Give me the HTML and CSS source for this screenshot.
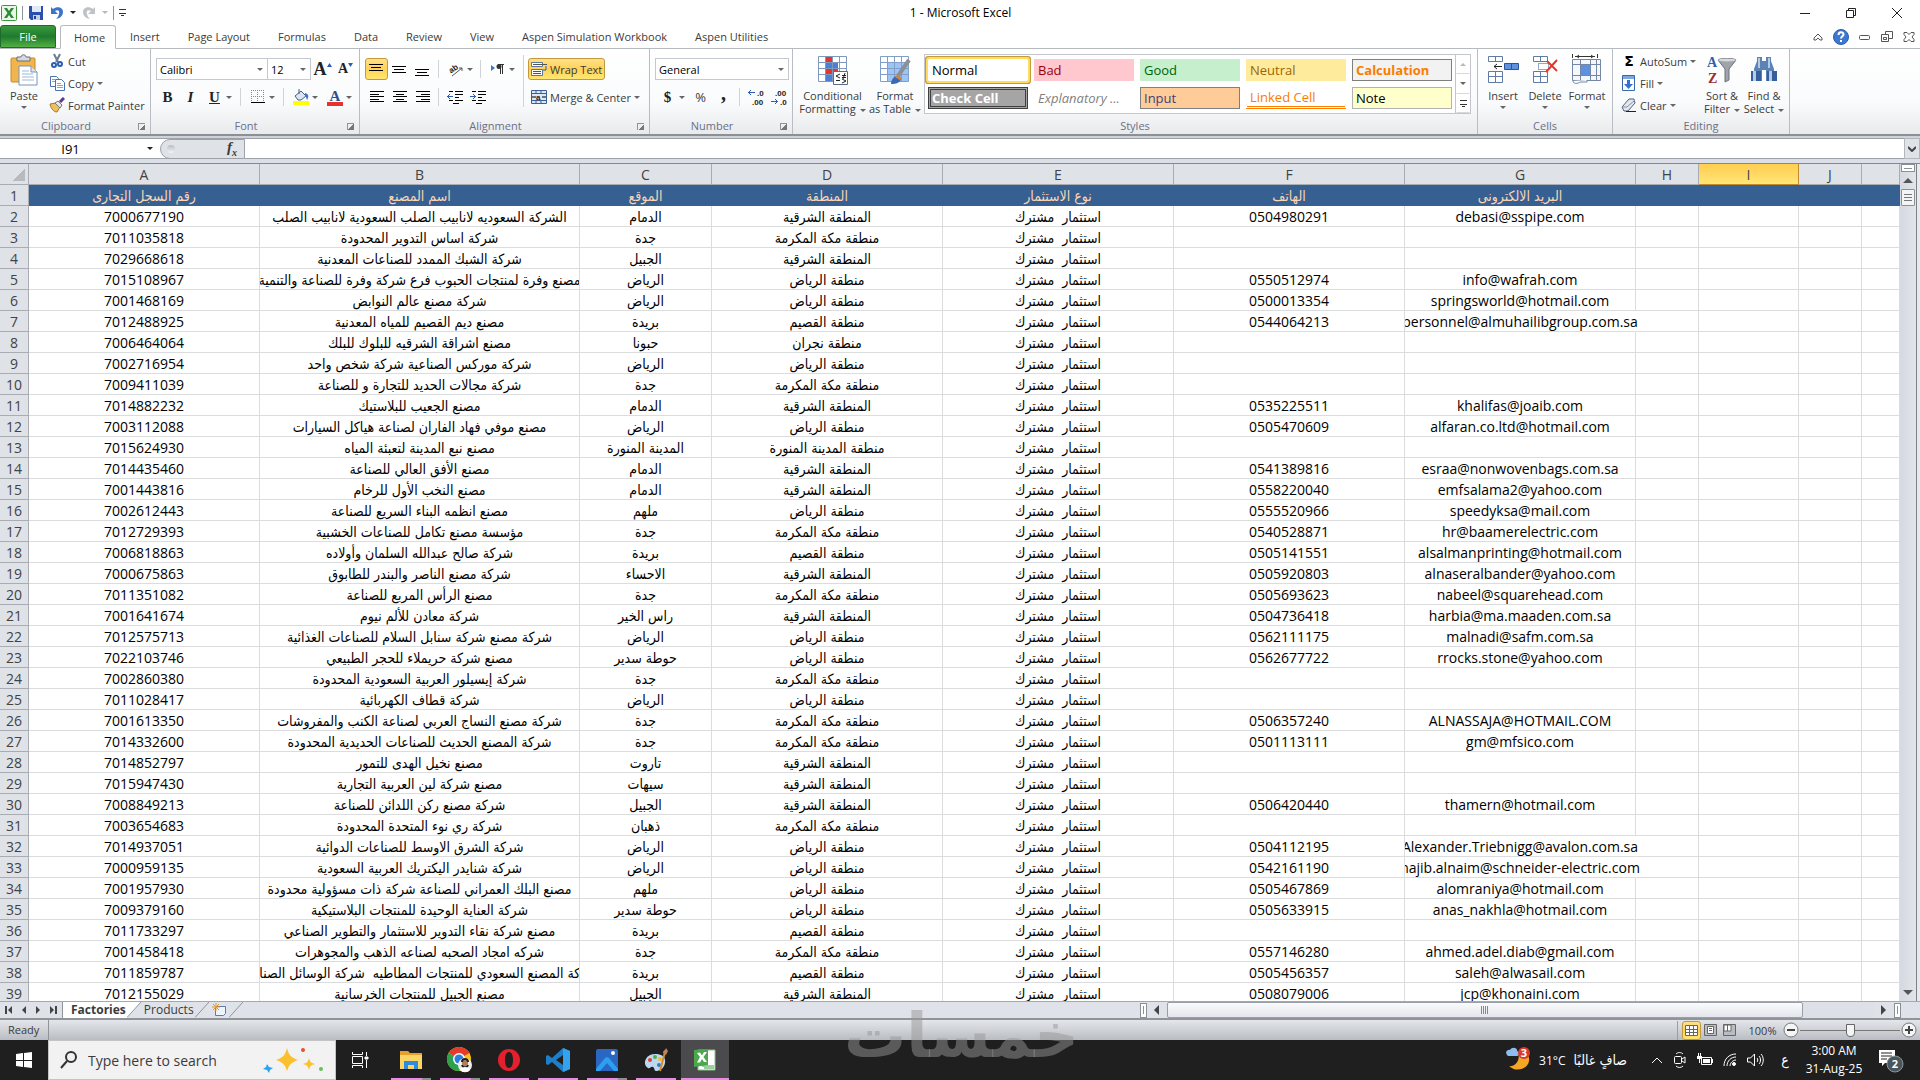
FILE: index.html
```html
<!DOCTYPE html>
<html lang="en">
<head>
  <meta charset="UTF-8">
  <meta name="viewport" content="width=device-width, initial-scale=1.0">
  <title>1 - Microsoft Excel</title>
  <link rel="stylesheet" href="styles.css">
</head>
<body>
  <header class="titlebar">
    <div class="quick">
      <svg width="16" height="16" viewBox="0 0 16 16"><rect x=".5" y=".5" width="15" height="15" rx="1" fill="#e9f5e6" stroke="#3c9a3c"/><path d="M3 3h3l2 3 2-3h3l-3.500 5 3.500 5h-3L8 10l-2 3H3l3.500-5z" fill="#2a8a35"/></svg>
      <span class="bar"></span>
      <button aria-label="Save"><svg width="14" height="14" viewBox="0 0 14 14"><path d="M0 0h14v14H2L0 12z" fill="#2b4fae"/><path d="M3 0h9v6H3z" fill="#dfe9f8"/><path d="M4 9h7v5H4z" fill="#c7d0de"/><path d="M5 10h2v3H5z" fill="#24418f"/></svg></button>
      <button aria-label="Undo"><svg width="14" height="14" viewBox="0 0 14 14"><path d="M1 1v7h7L5 5c3-2 5 0 4 3-.5 2-1 3-3 5 5-1 7-4 7-7 0-5-6-6-10-3z" fill="#3b74c9"/></svg></button>
      <i class="caret dark"></i>
      <button aria-label="Redo"><svg width="14" height="14" viewBox="0 0 14 14"><path d="M13 1v7H6l3-3C6 3 4 5 5 8c.5 2 1 3 3 5-5-1-7-4-7-7 0-5 6-6 10-3z" fill="#bfc3c8"/></svg></button>
      <i class="caret light"></i>
      <span class="bar"></span>
      <i class="more"></i>
    </div>
    <h1 class="title">1 - Microsoft Excel</h1>
    <div class="window-buttons">
      <button aria-label="Minimize"><svg width="12" height="12"><path d="M1 6.500h10" stroke="#222"/></svg></button>
      <button aria-label="Restore"><svg width="12" height="12" fill="none" stroke="#222"><path d="M1.500 3.500h7v7h-7zM3.500 3.500v-2h7v7h-2"/></svg></button>
      <button aria-label="Close"><svg width="12" height="12"><path d="M1 1l10 10M11 1L1 11" stroke="#222"/></svg></button>
    </div>
  </header>

  <nav class="tabs">
    <button class="tab file">File</button>
    <button class="tab active">Home</button>
    <button class="tab">Insert</button>
    <button class="tab">Page Layout</button>
    <button class="tab">Formulas</button>
    <button class="tab">Data</button>
    <button class="tab">Review</button>
    <button class="tab">View</button>
    <button class="tab">Aspen Simulation Workbook</button>
    <button class="tab">Aspen Utilities</button>
    <div class="tab-tools">
      <button aria-label="Collapse ribbon"><svg width="10" height="8" fill="none" stroke="#555"><path d="M1 5l4-4 4 4v2H7L5 5 3 7H1z"/></svg></button>
      <button aria-label="Help"><svg width="16" height="16"><circle cx="8" cy="8" r="7.500" fill="#3c78cf" stroke="#2a5cab"/><path d="M5.500 6c0-3.500 5-3.500 5-.5 0 1.500-2.500 2-2.500 4M8 11v2" fill="none" stroke="#fff" stroke-width="2"/></svg></button>
      <button aria-label="Minimize workbook"><svg width="12" height="8"><rect x=".5" y="2.500" width="10" height="4" rx="1" fill="#fff" stroke="#555"/></svg></button>
      <button aria-label="Restore workbook"><svg width="12" height="12" fill="#fff" stroke="#555"><path d="M4.500.5h7v7h-7z"/><path d="M.5 3.500h7v7h-7z"/><path d="M2.500 6.500h3v2h-3z"/></svg></button>
      <button aria-label="Close workbook"><svg width="12" height="10" fill="#fff" stroke="#555"><path d="M1 .5h3l2 2 2-2h3v2L9 5l2 2.500v2H8l-2-2-2 2H1v-2L3 5 1 2.500z"/></svg></button>
    </div>
  </nav>

  <section class="ribbon">
    <div class="group clipboard">
      <div class="group-body">
        <button class="big paste">
          <svg width="30" height="32" viewBox="0 0 30 32"><rect x="2" y="4" width="24" height="24" rx="1" fill="#f0b54c" stroke="#c98a28"/><path d="M8 3h4c0-3 5-3 5 0h4v4H8z" fill="#d5d8dc" stroke="#6c6f75"/><path d="M10 12h12l6 6v13H10z" fill="#fff" stroke="#7c93b5"/><path d="M22 12v6h6" fill="#d9e5f5" stroke="#7c93b5"/><path d="M13 17h7M13 20h11M13 23h12M13 26h12" stroke="#9fb9de"/></svg>
          <span>Paste</span><i class="caret"></i>
        </button>
        <div class="stack">
          <button class="small"><svg width="16" height="16" viewBox="0 0 16 16" fill="none"><path d="M5 1l4 8M11 1L7 9" stroke="#6b7c93" stroke-width="2"/><circle cx="5" cy="12" r="2" stroke="#2b5db5" stroke-width="2"/><circle cx="11" cy="11" r="2" stroke="#2b5db5" stroke-width="2"/></svg>Cut</button>
          <button class="small"><svg width="16" height="16" viewBox="0 0 16 16" fill="#fff" stroke="#4a72b0"><path d="M1.500 1.500h6l2 2v8h-8z"/><path d="M6.500 4.500h6l3 3v8h-9z"/><path d="M8 8.500h4M8 10.500h6M8 12.500h6M3 4.500h3M3 6.500h3" stroke="#7fa5db"/></svg>Copy<i class="caret"></i></button>
          <button class="small"><svg width="16" height="16" viewBox="0 0 16 16"><path d="M1 7l6-1 4 4-3 5c-3 0-6-3-7-8z" fill="#efbf5b" stroke="#a9762a"/><path d="M6 6l3-2 4 4-2 3z" fill="#e3e6ea" stroke="#777"/><path d="M11 5l4-4" stroke="#5d3a86" stroke-width="3"/></svg>Format Painter</button>
        </div>
      </div>
      <div class="group-label">Clipboard<i class="launcher"></i></div>
    </div>

    <div class="group font">
      <div class="group-body rows">
        <div class="row">
          <select class="font-name" aria-label="Font"><option>Calibri</option></select>
          <select class="font-size" aria-label="Font size"><option>12</option></select>
          <button class="tool grow serif" aria-label="Grow font">A<svg width="5" height="4"><path d="M0 4l2.500-4L5 4z" fill="#2b5db5"/></svg></button>
          <button class="tool shrink serif" aria-label="Shrink font">A<svg width="5" height="4"><path d="M0 0h5L2.500 4z" fill="#2b5db5"/></svg></button>
        </div>
        <div class="row">
          <button class="tool serif"><b>B</b></button>
          <button class="tool serif"><em>I</em></button>
          <button class="tool split serif"><span><u>U</u></span><i class="caret"></i></button>
          <span class="sep"></span>
          <button class="tool split" aria-label="Borders"><span><svg width="14" height="14"><path d="M.5 0v12M6.500 0v12M12.500 0v12M0 .5h13M0 6.500h13" stroke="#888" stroke-dasharray="1 1"/><path d="M0 12.500h14" stroke="#000"/></svg></span><i class="caret"></i></button>
          <span class="sep"></span>
          <button class="tool split" aria-label="Fill color"><span><svg width="16" height="16" viewBox="0 0 16 16"><path d="M2 7l6-5 5 5-5 4H5z" fill="#dce6f2" stroke="#4c5f7c"/><path d="M6 0v5" stroke="#4c5f7c"/><path d="M12 4c4 1 4 4 2 7-1-2-1-4-2-4z" fill="#3c78cf"/><path d="M0 12h16v4H0z" fill="#ff0"/></svg></span><i class="caret"></i></button>
          <button class="tool split serif font-color"><span>A</span><i class="caret"></i></button>
        </div>
      </div>
      <div class="group-label">Font<i class="launcher"></i></div>
    </div>

    <div class="group alignment">
      <div class="group-body">
        <div class="rows align-left">
          <div class="row">
            <button class="tool on" aria-label="Top align"><svg width="14" height="14" stroke="#000"><path d="M0 2.500h14M2 5.500h10M0 8.500h14"/></svg></button>
            <button class="tool" aria-label="Middle align"><svg width="14" height="14" stroke="#000"><path d="M0 4.500h14M2 7.500h10M0 10.500h14"/></svg></button>
            <button class="tool" aria-label="Bottom align"><svg width="14" height="14" stroke="#000"><path d="M0 7.500h14M2 10.500h10M0 13.500h14"/></svg></button>
            <span class="sep"></span>
            <button class="tool split" aria-label="Orientation"><span><svg width="18" height="18"><text x="3" y="11" transform="rotate(-35 8 9)" class="tiny">ab</text><path d="M6 16L16 8M16 11V8h-3" stroke="#555" fill="none"/></svg></span><i class="caret"></i></button>
            <span class="sep"></span>
            <button class="tool split" aria-label="Text direction"><span><svg width="14" height="12"><path d="M0 2l4 3-4 3z" fill="#3c78cf"/><path d="M9.500 2v9M11.500 2v9M7 1.500h6" stroke="#333"/><circle cx="8" cy="3.500" r="2.500" fill="#333"/></svg></span><i class="caret"></i></button>
          </div>
          <div class="row">
            <button class="tool" aria-label="Align left"><svg width="14" height="12" stroke="#000"><path d="M0 .5h14M0 3.500h9M0 5.500h14M0 8.500h9M0 10.500h14"/></svg></button>
            <button class="tool" aria-label="Center"><svg width="14" height="12" stroke="#000"><path d="M0 .5h14M3 3.500h8M0 5.500h14M3 8.500h8M0 10.500h14"/></svg></button>
            <button class="tool" aria-label="Align right"><svg width="14" height="12" stroke="#000"><path d="M0 .5h14M5 3.500h9M0 5.500h14M5 8.500h9M0 10.500h14"/></svg></button>
            <span class="sep"></span>
            <button class="tool" aria-label="Decrease indent"><svg width="16" height="14" stroke="#000"><path d="M2 1.500h4M8 1.500h8M8 4.500h8M8 7.500h4M8 10.500h8M2 10.500h4M6 13.500h6"/><path d="M0 6.500h6M3 4L.5 6.500 3 9" stroke="#2b5db5" fill="none"/></svg></button>
            <button class="tool" aria-label="Increase indent"><svg width="16" height="14" stroke="#000"><path d="M2 1.500h4M8 1.500h8M8 4.500h8M8 7.500h4M8 10.500h8M2 10.500h4M6 13.500h6"/><path d="M0 6.500h6M3 4l2.500 2.500L3 9" stroke="#2b5db5" fill="none"/></svg></button>
          </div>
        </div>
        <span class="sep tall"></span>
        <div class="rows align-right">
          <button class="small on"><svg width="16" height="16" viewBox="0 0 16 16"><path d="M.5 1.500h11v4H.5zM.5 8.500h11v6H.5z" fill="#fff" stroke="#56779f"/><path d="M2 3.500h14M2 10.500h8M2 12.500h8" stroke="#555"/><path d="M15 5v4h-3" stroke="#2b5db5" fill="none"/></svg>Wrap Text</button>
          <button class="small"><svg width="16" height="16" viewBox="0 0 16 16"><path d="M.5 1.500h15v13H.5zM.5 4.500h15M.5 11.500h15M5 1.500v3M10 1.500v3M5 11.500v3M10 11.500v3" fill="#dce8f7" stroke="#3c5f96"/><path d="M1 8h4M11 8h4" stroke="#000"/><text x="5" y="11" class="tiny">a</text></svg>Merge &amp; Center<i class="caret"></i></button>
        </div>
      </div>
      <div class="group-label">Alignment<i class="launcher"></i></div>
    </div>

    <div class="group number">
      <div class="group-body rows">
        <div class="row"><select class="number-format" aria-label="Number format"><option>General</option></select></div>
        <div class="row">
          <button class="tool split serif"><span>$</span><i class="caret"></i></button>
          <button class="tool percent">%</button>
          <button class="tool serif comma">,</button>
          <span class="sep"></span>
          <button class="tool" aria-label="Increase decimal"><svg width="18" height="20"><path d="M1 5.500h7M4 3L1.500 5.500 4 8" stroke="#2b5db5" fill="none"/><text x="10" y="9" class="tiny">.0</text><text x="5" y="18" class="tiny">.00</text></svg></button>
          <button class="tool" aria-label="Decrease decimal"><svg width="18" height="20"><path d="M1 14.500h7M5 12l2.500 2.500L5 17" stroke="#2b5db5" fill="none"/><text x="5" y="9" class="tiny">.00</text><text x="10" y="18" class="tiny">.0</text></svg></button>
        </div>
      </div>
      <div class="group-label">Number<i class="launcher"></i></div>
    </div>

    <div class="group styles">
      <div class="group-body">
        <button class="big conditional">
          <svg width="32" height="32" viewBox="0 0 32 32"><path d="M1.500 2.500h28v25h-28z" fill="#fff"/><path d="M8 2h7v6H8zM8 14h13v6H8z" fill="#e0362c"/><path d="M8 8h13v6H8z" fill="#4a7fd8"/><path d="M8 20h7v7H8z" fill="#4a7fd8"/><path d="M1.500 2.500h28v25h-28zM8.500 2v25M15.500 2v25M22.500 2v25M1 8.500h28M1 14.500h28M1 20.500h28" fill="none" stroke="#7f97bd"/><path d="M16.500 17.500h14v13h-14z" fill="#fff" stroke="#5c6c84"/><path d="M23 20l-4 2 4 2M19 26.500h4M25 21.500h4M25 23.500h4M28 19l-2 6M25 25l4 2-4 2" fill="none" stroke="#222"/></svg>
          <span>Conditional<br>Formatting<i class="caret"></i></span>
        </button>
        <button class="big as-table">
          <svg width="32" height="32" viewBox="0 0 32 32"><path d="M1.500 2.500h28v25h-28z" fill="#fff"/><path d="M8 8h21v19H8z" fill="#9cc4f5"/><path d="M1.500 2.500h28v25h-28zM8.500 2v25M15.500 2v25M22.500 2v25M1 8.500h28M1 14.500h28M1 20.500h28" fill="none" stroke="#7f9fc8"/><path d="M19 22L30 6" stroke="#8b8f96" stroke-width="4"/><path d="M12 30c0-4 3-8 6-8l4 3c-1 4-5 5-10 5z" fill="#3969b5"/><path d="M17 22l5 3" stroke="#c9854a" stroke-width="3"/></svg>
          <span>Format<br>as Table<i class="caret"></i></span>
        </button>
        <div class="gallery">
          <div class="swatches">
            <button class="swatch normal">Normal</button>
            <button class="swatch bad">Bad</button>
            <button class="swatch good">Good</button>
            <button class="swatch neutral">Neutral</button>
            <button class="swatch calculation">Calculation</button>
            <button class="swatch check">Check Cell</button>
            <button class="swatch explanatory">Explanatory ...</button>
            <button class="swatch input">Input</button>
            <button class="swatch linked">Linked Cell</button>
            <button class="swatch note">Note</button>
          </div>
          <div class="gallery-nav">
            <button aria-label="Previous styles"><i class="caret up light"></i></button>
            <button aria-label="Next styles"><i class="caret"></i></button>
            <button aria-label="More styles"><i class="more"></i></button>
          </div>
        </div>
      </div>
      <div class="group-label">Styles</div>
    </div>

    <div class="group cells">
      <div class="group-body">
        <button class="big">
          <svg width="32" height="32" viewBox="0 0 32 32"><path d="M1.500 2.500h14v5h-14zM8.500 2.500v5M1.500 17.500h14v11h-14zM8.500 17v11M1 22.500h14" fill="#fff" stroke="#5f7ba6"/><path d="M17.500 9.500h14v6h-14zM24.500 9v6" fill="#5c92e0" stroke="#2d5596"/><path d="M7 12.500h8M10 10l-3 2.500 3 2.500" fill="none" stroke="#222"/></svg>
          <span>Insert</span><i class="caret"></i>
        </button>
        <button class="big">
          <svg width="32" height="32" viewBox="0 0 32 32"><path d="M4.500 2.500h14v5h-14zM11.500 2.500v5M4.500 17.500h14v11h-14zM11.500 17v11M4 22.500h14" fill="#fff" stroke="#5f7ba6"/><path d="M9.500 9.500h10v6h-10z" fill="#fff" stroke="#2d5596" stroke-dasharray="1 1"/><path d="M18 7l10 10M28 6L17 18" stroke="#e2382b" stroke-width="2"/></svg>
          <span>Delete</span><i class="caret"></i>
        </button>
        <button class="big">
          <svg width="32" height="32" viewBox="0 0 32 32"><path d="M1.500 5.500h28v21h-28z" fill="#f4f7fb"/><path d="M10 11h9v10h-9z" fill="#5c92e0"/><path d="M1.500 5.500h28v21h-28zM9.500 5v21M19.500 5v21M25.500 5v21M1 10.500h28M1 21.500h28" fill="none" stroke="#7487a5"/><path d="M1.500 0v4M26.500 0v4M4 2.500h20M8 1L6 2.500 8 4M20 1l2 1.500L20 4" fill="none" stroke="#333"/><path d="M2 27c0 3 5 3 7 1h7v-2" fill="#fff" stroke="#7487a5"/></svg>
          <span>Format</span><i class="caret"></i>
        </button>
      </div>
      <div class="group-label">Cells</div>
    </div>

    <div class="group editing">
      <div class="group-body">
        <div class="stack">
          <button class="small"><b class="sigma">Σ</b>AutoSum<i class="caret"></i></button>
          <button class="small"><svg width="16" height="16" viewBox="0 0 16 16"><path d="M1.500.5h12v15h-12z" fill="#fff" stroke="#3a66ab"/><path d="M2 1h11v3H2z" fill="#7ea6df"/><path d="M6 5h3v4h3l-4.500 5L3 9h3z" fill="#3273d2"/></svg>Fill<i class="caret"></i></button>
          <button class="small"><svg width="16" height="16" viewBox="0 0 16 16"><path d="M1 10l7-8h5l1 4-7 8H3z" fill="#e4e9f0" stroke="#555f70"/><path d="M1 10h5l8-7" fill="none" stroke="#8190a8"/><path d="M5 14.500h10" stroke="#222"/></svg>Clear<i class="caret"></i></button>
        </div>
        <button class="big">
          <svg width="32" height="32" viewBox="0 0 32 32"><text x="1" y="13" class="sort-a">A</text><text x="2" y="29" class="sort-z">Z</text><path d="M12 6c0-2 18-2 18 0l-7 9v11l-4 2V15z" fill="#9fa4ab" stroke="#6d7278"/><ellipse cx="21" cy="6" rx="9" ry="1.500" fill="#d6d9dd"/></svg>
          <span>Sort &amp;<br>Filter<i class="caret"></i></span>
        </button>
        <button class="big">
          <svg width="32" height="32" viewBox="0 0 32 32"><path d="M9 3h5v4h4V3h5v4l3 8v12h-8V16h-4v11H6V15l3-8z" fill="#5b83b8"/><path d="M3 17h10v10H3zM19 17h10v10H19z" fill="#345f9c"/><path d="M5 17h3v10H5zM21 17h3v10h-3zM10 4h2v10h-2zM20 4h2v10h-2z" fill="#b4cbe6"/></svg>
          <span>Find &amp;<br>Select<i class="caret"></i></span>
        </button>
      </div>
      <div class="group-label">Editing</div>
    </div>
  </section>

  <section class="formula-bar">
    <input class="name-box" value="I91" aria-label="Name box">
    <i class="caret dark"></i>
    <div class="fx"><i class="knob"></i><button><em>f<sub>x</sub></em></button></div>
    <input class="formula" value="" aria-label="Formula">
    <button class="expand" aria-label="Expand formula bar"><svg width="8" height="6"><path d="M0 1l4 4 4-4" fill="none" stroke="#444" stroke-width="2"/></svg></button>
  </section>

  <main class="workspace">
    <div class="sheet">
      <table class="grid">
        <colgroup>
          <col class="c-row"><col class="c-wide"><col class="c-name"><col class="c-city"><col class="c-wide"><col class="c-wide"><col class="c-wide"><col class="c-wide"><col class="c-thin"><col class="c-sel"><col class="c-thin"><col>
        </colgroup>
        <thead>
          <tr><th class="corner"></th><th>A</th><th>B</th><th>C</th><th>D</th><th>E</th><th>F</th><th>G</th><th>H</th><th class="selected">I</th><th>J</th><th></th></tr>
        </thead>
        <tbody id="rows"></tbody>
      </table>
    </div>
    <div class="vscroll">
      <i class="split-box"></i>
      <i class="caret up big-caret"></i>
      <i class="thumb"></i>
      <i class="caret big-caret end"></i>
    </div>
  </main>

  <section class="sheet-bar">
    <div class="sheet-nav">
      <button aria-label="First sheet"><svg width="8" height="8"><path d="M1 0v8" stroke="#444" stroke-width="2"/><path d="M7 0v8L3 4z" fill="#444"/></svg></button>
      <button aria-label="Previous sheet"><svg width="8" height="8"><path d="M6 0v8L2 4z" fill="#444"/></svg></button>
      <button aria-label="Next sheet"><svg width="8" height="8"><path d="M2 0v8l4-4z" fill="#444"/></svg></button>
      <button aria-label="Last sheet"><svg width="8" height="8"><path d="M7 0v8" stroke="#444" stroke-width="2"/><path d="M1 0v8l4-4z" fill="#444"/></svg></button>
    </div>
    <button class="sheet-tab current">Factories</button>
    <svg class="slant" width="14" height="16"><path d="M0 0h14L0 16z" fill="#fff"/><path d="M0 15.500L14 0" stroke="#8f959c"/></svg>
    <button class="sheet-tab">Products</button>
    <svg class="slant" width="14" height="16"><path d="M0 15.500L14 0" stroke="#8f959c"/></svg>
    <button class="sheet-new" aria-label="Insert worksheet"><svg width="16" height="14"><path d="M3.500 3.500h10v7l-2 2h-8z" fill="#eef4fc" stroke="#5f7ba6"/><path d="M4 0v8M0 4h8M1 1l6 6M7 1L1 7" stroke="#e59a2c"/></svg></button>
    <svg class="slant" width="14" height="16"><path d="M0 15.500L14 0" stroke="#8f959c"/></svg>
    <div class="hscroll">
      <i class="split-box"></i>
      <svg width="6" height="10"><path d="M5 0v10L0 5z" fill="#444"/></svg>
      <div class="track"><div class="thumb"><svg width="8" height="8"><path d="M.5 0v8M2.500 0v8M4.500 0v8M6.500 0v8" stroke="#888"/></svg></div></div>
      <svg width="6" height="10"><path d="M0 0v10l5-5z" fill="#444"/></svg>
      <i class="split-box"></i>
    </div>
  </section>

  <footer class="status">
    <span class="ready">Ready</span>
    <div class="views">
      <button class="on" aria-label="Normal view"><svg width="13" height="11"><path d="M.5.5h12v10H.5zM4.500 0v11M8.500 0v11M0 4.500h12M0 7.500h12" fill="#fff" stroke="#666"/></svg></button>
      <button aria-label="Page layout view"><svg width="13" height="12"><path d="M.5.5h12v11H.5z" fill="#b9bdc3" stroke="#666"/><path d="M3.500 2.500h6v7h-6zM5 4.500h3M5 6.500h3" fill="#fff" stroke="#666"/></svg></button>
      <button aria-label="Page break view"><svg width="13" height="12"><path d="M.5.5h12v11H.5z" fill="#b9bdc3" stroke="#666"/><path d="M1 1h7v6H1zM4.500 1v6" fill="#fff" stroke="#666"/></svg></button>
    </div>
    <span class="percent-label">100%</span>
    <button class="zoom-btn" aria-label="Zoom out"><svg width="16" height="16"><circle cx="8" cy="8" r="7" fill="#f4f5f6" stroke="#777"/><path d="M4 8h8" stroke="#444" stroke-width="2"/></svg></button>
    <input class="zoom" type="range" min="0" max="100" value="50" aria-label="Zoom">
    <button class="zoom-btn" aria-label="Zoom in"><svg width="16" height="16"><circle cx="8" cy="8" r="7" fill="#f4f5f6" stroke="#777"/><path d="M4 8h8M8 4v8" stroke="#444" stroke-width="2"/></svg></button>
  </footer>

  <div class="watermark" lang="ar">خمسات</div>

  <div class="taskbar">
    <button class="start" aria-label="Start"><svg width="16" height="16" fill="#fff"><path d="M0 2l7-1v7H0zM8 1l8-1v8H8zM0 9h7v6l-7-1zM8 9h8v7l-8-1z"/></svg></button>
    <label class="search">
      <svg width="18" height="18" fill="none" stroke="#333" stroke-width="2"><circle cx="11" cy="6" r="5"/><path d="M7 10l-6 7"/></svg>
      <input type="text" placeholder="Type here to search" aria-label="Search">
      <svg width="62" height="26" viewBox="0 0 62 26"><path d="M24 1c2 7 3 9 11 12-8 3-9 5-11 11-2-6-3-8-11-11 8-3 9-5 11-12z" fill="#fbc02d"/><path d="M46 11c1 4 2 5 6 6-4 1-5 2-6 6-1-4-2-5-6-6 4-1 5-2 6-6z" fill="#fbc02d"/><path d="M4 17l2 3 4 1-3 2-1 3-2-3-4-1 3-2z" fill="#29a3f2"/><circle cx="40" cy="3" r="2" fill="#e8502a"/><circle cx="58" cy="22" r="2" fill="#6dbd5b"/></svg>
    </label>
    <button class="task-view" aria-label="Task view"><svg width="18" height="16" fill="none" stroke="#fff"><path d="M1.500 4.500h10v7h-10zM1.500 0v2.500h10V0M1.500 16v-2.500h10V16M15.500 0v4M15.500 8v8"/><path d="M14 5h3v2h-3z" fill="#fff"/></svg></button>
    <div class="apps">
      <button class="open multi" aria-label="File Explorer"><svg width="22" height="20"><path d="M0 1h8l2 2h12v16H0z" fill="#e8a128"/><path d="M0 5h22v14H0z" fill="#fbd566"/><path d="M4 19v-8h14v8h-4v-4H8v4z" fill="#2f8be0"/></svg></button>
      <button class="open multi" aria-label="Chrome"><svg width="26" height="26"><circle cx="12" cy="12" r="12" fill="#fbc116"/><path d="M12 12L1.600 6A12 12 0 0 1 22.400 6z" fill="#e33b2e"/><path d="M12 12L1.600 6A12 12 0 0 0 12 24l5-9z" fill="#2da14c"/><circle cx="12" cy="12" r="6" fill="#fff"/><circle cx="12" cy="12" r="4.500" fill="#2f7de1"/><circle cx="18" cy="18" r="7" fill="#eee"/><circle cx="18" cy="16" r="3" fill="#b57b54"/><path d="M15 15c0-4 6-4 6 0M15 18c1 3 5 3 6 0" stroke="#222" stroke-width="2" fill="none"/><path d="M13 23c1-4 9-4 10 0-2 3-8 3-10 0z" fill="#fff"/></svg></button>
      <button class="open" aria-label="Opera"><svg width="22" height="22"><path d="M11 0a11 11 0 1 0 0 22 11 11 0 0 0 0-22zm0 3c3 0 4 4 4 8s-1 8-4 8-4-4-4-8 1-8 4-8z" fill="#e4202c"/></svg></button>
      <button class="open" aria-label="Visual Studio Code"><svg width="24" height="24"><path d="M17 0l7 3v18l-7 3L6 14l-4 3-2-1V8l2-1 4 3zm0 7l-7 5 7 5z" fill="#1e7fc8"/><path d="M17 0l7 3v18l-7 3z" fill="#35a2ee"/></svg></button>
      <button class="open multi" aria-label="Photos"><svg width="22" height="22"><rect width="22" height="22" rx="2" fill="#2c66c3"/><path d="M0 20l9-11c1-1 3-1 4 0l9 11v2H0z" fill="#2aa0f0"/><path d="M4 22l7-8 7 8z" fill="#2c66c3"/><circle cx="17" cy="4" r="2" fill="#fff"/></svg></button>
      <button class="open" aria-label="Paint"><svg width="24" height="24"><path d="M11 6c7 0 11 3 10 9s-6 8-9 8c-2 0-1-3-3-4s-3 2-5 1C-2 17 1 6 11 6z" fill="#bcd9f0"/><circle cx="6" cy="12" r="2" fill="#e3402f"/><circle cx="11" cy="9" r="2" fill="#52b04a"/><circle cx="16" cy="11" r="2" fill="#f5b921"/><circle cx="15" cy="17" r="2" fill="#3a76cc"/><path d="M21 4l-5 19" stroke="#d98a2b" stroke-width="2"/><path d="M19 5c0-3 2-2 3-5l2 3-2 4z" fill="#b8855d"/></svg></button>
      <button class="open current" aria-label="Excel"><svg width="22" height="22"><path d="M4 1h17v20H4z" fill="#fff" stroke="#8dc08d"/><path d="M0 1l14-1v16L0 18z" fill="#49a84c"/><path d="M3 4l3-.5 2 3 2-3.500h3L9.500 8l3.500 5h-3L8 10l-2 3.500H3L6 8z" fill="#fff"/><path d="M8 17h12M10 19h10" stroke="#3b9c40"/></svg></button>
    </div>
    <div class="tray">
      <button class="weather">
        <svg width="26" height="26"><path d="M13 5c6-3 12 2 11 9-1 8-13 12-20 5 5 1 12-4 9-14z" fill="#f5a623"/><path d="M2 8c-3-4 2-6 3-5 2-4 8-2 7 1 4 1 2 5 0 5H3z" fill="#8fbcf0"/><circle cx="19" cy="6" r="6" fill="#d93a2b"/><text x="19" y="10" class="badge">3</text></svg>
        <span>31°C</span><span class="ar">صافٍ غالبًا</span>
      </button>
      <button aria-label="Show hidden icons"><svg width="12" height="8"><path d="M1 7l5-5 5 5" stroke="#fff" fill="none"/></svg></button>
      <button aria-label="Meet now"><svg width="14" height="16" fill="none" stroke="#fff"><rect x="1.500" y="4.500" width="7" height="7" rx="1"/><path d="M9 7l3-2v6L9 9M3 2c2-2 5-2 7 0M3 14c2 2 5 2 7 0"/></svg></button>
      <button aria-label="Battery"><svg width="16" height="14"><path d="M4.500 4.500h10v7h-10z" fill="none" stroke="#fff"/><path d="M6 6h7v4H6zM15 6h1v4h-1zM0 3h5v3H0zM1 0h1v3H1zM3 0h1v3H3zM2 6h1v4H2z" fill="#fff"/></svg></button>
      <button aria-label="Network"><svg width="14" height="14" fill="none" stroke="#fff"><path d="M1 13C1 6 6 1 13 1M4 13c0-5 4-9 9-9M7 13c0-3 3-6 6-6"/><circle cx="11" cy="11" r="1.500" fill="#fff"/></svg></button>
      <button aria-label="Volume"><svg width="18" height="14" fill="none" stroke="#fff"><path d="M.5 5v4h3l4 4V1l-4 4zM10 5c1 1 1 3 0 4M12 3c2 2 2 6 0 8M14 1c3 3 3 9 0 12"/></svg></button>
      <button class="lang ar">ع</button>
      <button class="clock"><span>3:00 AM</span><span>31-Aug-25</span></button>
      <button class="notify" aria-label="Notifications"><svg width="26" height="26"><path d="M0 3h16v13H6l-3 3v-3H0z" fill="#fff"/><path d="M2 6h11M2 9h11M2 12h6" stroke="#222"/><circle cx="16" cy="17" r="8" fill="#49565b" stroke="#8a9699"/><text x="16" y="21" class="badge">2</text></svg></button>
    </div>
  </div>

  <script src="script.js"></script>
</body>
</html>
```
FILE: styles.css
```css
* {
  box-sizing: border-box;
}

body {
  margin: 0;
  height: 100vh;
  display: flex;
  flex-direction: column;
  overflow: hidden;
  background: #fff;
  color: #3b3b3b;
  font-family: "Open Sans", sans-serif;
  font-size: 11px;
}

button {
  font: inherit;
  color: inherit;
  border: 1px solid transparent;
  background: none;
  padding: 0;
  cursor: pointer;
}

input,
select {
  font: inherit;
  color: #000;
  border-radius: 0;
  outline: none;
}

svg {
  display: block;
  flex: none;
}

/* small arrows */
.caret {
  flex: none;
  width: 0;
  height: 0;
  border: 3px solid transparent;
  border-top-color: #666;
  border-bottom: 0;
}

.caret.dark {
  border-top-color: #222;
}

.caret.light {
  border-top-color: #b5b8bc;
}

.caret.up {
  border-top: 0;
  border-bottom: 3px solid #b5b8bc;
}

.more {
  width: 7px;
  height: 7px;
  border-top: 1px solid #333;
  background: linear-gradient(#333, #333) 0 3px / 7px 1px no-repeat, linear-gradient(#333, #333) 2px 5px / 3px 1px no-repeat;
}

/* title bar */
.titlebar {
  height: 25px;
  display: flex;
  align-items: center;
  flex: none;
}

.quick,
.window-buttons {
  flex: 1;
  display: flex;
  align-items: center;
}

.quick {
  gap: 5px;
  padding-left: 1px;
}

.quick .bar {
  width: 1px;
  height: 14px;
  background: #8f9297;
}

.title {
  margin: 0;
  font-size: 12px;
  font-weight: normal;
  color: #000;
}

.window-buttons {
  justify-content: flex-end;
}

.window-buttons button {
  width: 46px;
  height: 25px;
  display: flex;
  align-items: center;
  justify-content: center;
}

/* ribbon tabs */
.tabs {
  height: 24px;
  display: flex;
  align-items: stretch;
  flex: none;
  border-bottom: 1px solid #b6babf;
}

.tab {
  padding: 0 13px;
}

.tab.file {
  width: 56px;
  margin-right: 4px;
  border-color: #1e6b2c;
  border-radius: 3px 3px 0 0;
  background: linear-gradient(#3a9a3f, #1f7a2d 50%, #52b043);
  color: #fff;
}

.tab.active {
  width: 56px;
  margin-bottom: -1px;
  border-color: #b6babf;
  border-bottom-color: #fff;
  border-radius: 3px 3px 0 0;
  background: #fff;
}

.tab-tools {
  margin-left: auto;
  padding-right: 4px;
  display: flex;
  align-items: center;
  gap: 8px;
}

/* ribbon */
.ribbon {
  height: 89px;
  display: flex;
  flex: none;
  background: linear-gradient(#fff, #fafbfc 60%, #e8eaed 85px, #8b9097 85px, #8b9097 87px, #cfd2d7 87px);
}

.group {
  height: 85px;
  display: flex;
  flex-direction: column;
  flex: none;
  border-right: 1px solid #b9bdc3;
}

.group-body {
  flex: 1;
  display: flex;
}

.group-label {
  height: 17px;
  line-height: 18px;
  position: relative;
  text-align: center;
  color: #6a7087;
}

.group-label:has(.launcher) {
  padding-right: 18px;
}

.launcher {
  position: absolute;
  right: 5px;
  top: 6px;
  width: 7px;
  height: 7px;
  border: solid #8f939a;
  border-width: 1px 0 0 1px;
  background: linear-gradient(135deg, transparent 50%, #777 50%);
}

.clipboard {
  width: 151px;
}

.font {
  width: 209px;
}

.alignment {
  width: 290px;
}

.number {
  width: 143px;
}

.styles {
  width: 685px;
}

.cells {
  width: 135px;
}

.editing {
  width: 177px;
}

.big {
  width: 42px;
  padding-top: 4px;
  display: flex;
  flex-direction: column;
  align-items: center;
  line-height: 13px;
  white-space: nowrap;
}

.big svg {
  margin-bottom: 3px;
}

.big > .caret {
  margin-top: 4px;
}

.big span .caret {
  display: inline-block;
  margin-left: 4px;
  vertical-align: middle;
}

.paste {
  width: 48px;
}

.conditional {
  width: 79px;
}

.as-table {
  width: 46px;
}

.stack {
  display: flex;
  flex-direction: column;
  padding-top: 1px;
}

.small {
  height: 22px;
  display: flex;
  align-items: center;
  gap: 3px;
  white-space: nowrap;
}

.rows {
  display: flex;
  flex-direction: column;
  gap: 6px;
  padding: 9px 0 0 5px;
}

.row {
  height: 22px;
  display: flex;
  align-items: center;
}

.row select {
  height: 22px;
  padding: 0 3px;
  border: 1px solid #c5c9ce;
  appearance: none;
  background: url("data:image/svg+xml,%3Csvg xmlns='http://www.w3.org/2000/svg' width='6' height='3'%3E%3Cpath d='M0 0h6L3 3z' fill='%23666'/%3E%3C/svg%3E") right 4px center no-repeat #fff;
}

.font-name {
  width: 112px;
}

.row .font-size {
  width: 44px;
  margin-left: -1px;
}

.number-format {
  width: 134px;
}

.tool {
  width: 23px;
  height: 22px;
  display: flex;
  align-items: center;
  justify-content: center;
}

.split {
  width: 34px;
  justify-content: flex-start;
}

.split span {
  width: 23px;
  display: flex;
  justify-content: center;
}

.serif {
  font-family: "Liberation Serif", serif;
  font-size: 15px;
  font-weight: bold;
  color: #222;
}

.grow svg,
.shrink svg {
  align-self: flex-start;
  margin-top: 4px;
}

.grow {
  font-size: 18px;
}

.shrink {
  font-size: 14px;
}

.font-color span {
  height: 17px;
  width: 16px;
  margin: 0 3px 0 4px;
  line-height: 14px;
  border-bottom: 4px solid #e5322b;
  color: #2d4f94;
}

.comma {
  align-items: flex-start;
  font-size: 20px;
  line-height: 12px;
}

.percent {
  font-size: 13px;
}

.tiny {
  font-family: "Liberation Sans", sans-serif;
  font-size: 8px;
  font-weight: bold;
  fill: #222;
}

.sep {
  width: 1px;
  height: 18px;
  margin: 0 4px;
  background: #d0d3d8;
}

.sep.tall {
  height: 52px;
  margin-top: 6px;
}

.on {
  border: 1px solid #c29a3c;
  border-radius: 3px;
  background: linear-gradient(#ffe08a, #ffd257 50%, #ffe672);
}

.align-left {
  width: 159px;
}

.align-right {
  padding-left: 0;
  align-items: flex-start;
}

.align-right .small {
  padding: 0 2px;
}

/* cell style gallery */
.gallery {
  height: 60px;
  margin: 5px 0 0 6px;
  display: flex;
  border: 1px solid #c3c7cd;
  background: #fff;
}

.swatches {
  display: grid;
  grid-template-columns: repeat(5, 100px);
  grid-template-rows: 22px 22px;
  gap: 6px;
  padding: 4px 3px;
}

.swatch {
  padding: 0 3px;
  line-height: 18px;
  text-align: left;
  font-size: 13px;
}

.normal {
  color: #000;
  outline: 2px solid #ffdc5f;
  border-radius: 1px;
  box-shadow: 0 0 0 3px #c29a3c;
}

.bad {
  background: #ffc7ce;
  color: #9c0006;
}

.good {
  background: #c6efce;
  color: #006100;
}

.neutral {
  background: #ffeb9c;
  color: #9c6500;
}

.calculation {
  border-color: #7f7f7f;
  background: #f2f2f2;
  color: #fa7d00;
  font-weight: bold;
}

.check {
  border: 3px double #3f3f3f;
  background: #a5a5a5;
  color: #fff;
  font-weight: bold;
  line-height: 14px;
  padding: 0 1px;
}

.explanatory {
  color: #7f7f7f;
  font-style: italic;
}

.input {
  border-color: #7f7f7f;
  background: #ffcc99;
  color: #3f3f76;
}

.linked {
  border-bottom: 3px double #ff8001;
  color: #fa7d00;
}

.note {
  border-color: #b2b2b2;
  background: #ffffcc;
  color: #000;
}

.gallery-nav {
  width: 15px;
  display: flex;
  flex-direction: column;
  border-left: 1px solid #c3c7cd;
}

.gallery-nav button {
  flex: 1;
  display: flex;
  align-items: center;
  justify-content: center;
  border-bottom: 1px solid #d5d8dc;
}

.cells .group-body {
  padding-left: 4px;
}

.editing .group-body {
  padding-left: 7px;
}

.editing .stack {
  width: 81px;
}

.sigma {
  width: 16px;
  font-family: "DejaVu Sans", sans-serif;
  font-size: 14px;
  color: #000;
  text-align: center;
}

.sort-a,
.sort-z {
  font-family: "Liberation Serif", serif;
  font-size: 14px;
  font-weight: bold;
  fill: #2f5fae;
}

.sort-z {
  fill: #9b2d2d;
}

/* formula bar */
.formula-bar {
  height: 25px;
  display: flex;
  align-items: center;
  flex: none;
  border-bottom: 4px solid #dcdfe8;
  box-shadow: inset 0 1px #9da2a9, inset 0 -1px #9da2a9;
}

.name-box {
  width: 147px;
  height: 19px;
  padding: 0 6px 0 0;
  border: 0;
  font-size: 13px;
  text-align: center;
  background: none;
}

.fx {
  width: 85px;
  height: 20px;
  margin-left: 7px;
  padding: 0 6px;
  display: flex;
  align-items: center;
  justify-content: space-between;
  border: 1px solid #9da2a9;
  border-radius: 10px 0 0 10px;
  background: #dfe2e6;
}

.knob {
  width: 8px;
  height: 8px;
  border-radius: 4px;
  background: linear-gradient(#b9bdc3, #f4f5f7);
}

.fx em {
  font-family: "Liberation Serif", serif;
  font-size: 15px;
  font-weight: bold;
  line-height: 15px;
}

.fx sub {
  font-size: 10px;
  line-height: 10px;
}

.formula {
  flex: 1;
  height: 19px;
  border: 0;
  background: none;
}

.expand {
  width: 16px;
  height: 21px;
  display: flex;
  align-items: center;
  justify-content: center;
  border: 1px solid #b4b8be;
  background: #dfe2e6;
}

/* worksheet */
.workspace {
  flex: 1;
  min-height: 0;
  display: flex;
  border-top: 1px solid #85898f;
}

.sheet {
  flex: 1;
  min-width: 0;
  overflow: hidden;
}

.grid {
  width: 100%;
  table-layout: fixed;
  border-collapse: separate;
  border-spacing: 0;
  color: #000;
}

.c-row {
  width: 29px;
}

.c-wide {
  width: 231px;
}

.c-name {
  width: 320px;
}

.c-city {
  width: 132px;
}

.c-thin {
  width: 63px;
}

.c-sel {
  width: 100px;
}

.grid th,
.grid td {
  height: 21px;
  padding: 0;
  border: solid #dadcdd;
  border-width: 0 1px 1px 0;
  font-weight: normal;
  line-height: 20px;
}

.grid th {
  padding-top: 1px;
  border-color: #a9adb3;
  background: #dfe2e6;
  color: #3f4347;
  font-size: 14px;
  line-height: 19px;
  text-align: center;
}

.grid .corner {
  background: linear-gradient(135deg, transparent 50%, #b7babf 50%) 12px 5px / 13px 12px no-repeat #dfe2e6;
}

.grid .selected {
  border-color: #c28a30;
  background: linear-gradient(#ffcf4f, #ffd660 40%, #ffe873);
}

.cell {
  height: 20px;
  line-height: 22px;
  display: flex;
  justify-content: center;
  overflow: hidden;
  white-space: pre;
  font-size: 14px;
}

.cell.ar {
  direction: rtl;
}

.ar {
  font-family: "DejaVu Sans Condensed", "DejaVu Sans", sans-serif;
  font-size: 14px;
}

/* long addresses run on into the empty column beside them */
.grid .spill {
  border-right-color: transparent;
}

.spill .cell {
  overflow: visible;
  clip-path: inset(0 -40px 0 0);
}

.headings td {
  border-color: #366092;
  background: #366092;
  color: #fcd5b4;
}

.vscroll {
  width: 20px;
  padding: 0 5px 4px 1px;
  display: flex;
  flex-direction: column;
  align-items: center;
  background: linear-gradient(90deg, #d5d9e0, #e2e5ea 16px, #7c8188 16px, #7c8188 17px, #e9e9ee 17px);
}

.split-box {
  width: 14px;
  height: 8px;
  border: 1px solid #8b9097;
  background: linear-gradient(#8b9097, #8b9097) center / 8px 1px no-repeat #fff;
}

.vscroll .big-caret {
  margin: 6px 0;
}

.big-caret {
  border-width: 5px;
  border-top-color: #555;
}

.big-caret.up {
  border-bottom: 5px solid #555;
}

.vscroll .thumb {
  width: 14px;
  height: 17px;
  border: 1px solid #8b9097;
  border-radius: 1px;
  background: repeating-linear-gradient(#777 0 1px, #f3f4f6 1px 3px) center / 8px 7px no-repeat #f3f4f6;
}

.vscroll .end {
  margin: auto 0 2px;
}

/* sheet tabs */
.sheet-bar {
  height: 17px;
  display: flex;
  flex: none;
  align-items: stretch;
  border-top: 1px solid #a3a9b0;
  background: #dfe2e8;
}

.sheet-nav {
  width: 63px;
  padding: 0 4px;
  display: flex;
  align-items: center;
  justify-content: space-between;
  border-right: 1px solid #8f959c;
}

.sheet-tab {
  padding: 0 0 0 2px;
  line-height: 14px;
  font-size: 12px;
}

.sheet-tab.current {
  padding-left: 7px;
  background: #fff;
  font-weight: bold;
}

.sheet-new {
  margin-left: 2px;
}

.hscroll {
  width: 780px;
  margin-left: auto;
  padding-right: 19px;
  display: flex;
  align-items: center;
  gap: 7px;
}

.hscroll .split-box {
  width: 7px;
  height: 15px;
  background: linear-gradient(#8b9097, #8b9097) center / 1px 8px no-repeat #fff;
}

.track {
  flex: 1;
  height: 16px;
  padding-right: 71px;
  background: #dde0e7;
}

.track .thumb {
  height: 16px;
  display: flex;
  align-items: center;
  justify-content: center;
  border: 1px solid #9a9fa7;
  border-radius: 2px;
  background: linear-gradient(#fafbfc, #e3e6ec);
}

/* status bar */
.status {
  height: 22px;
  display: flex;
  align-items: center;
  flex: none;
  padding-right: 2px;
  border-top: 2px solid #8f949b;
  background: linear-gradient(#e4e6ea, #b9bdc3);
}

.ready {
  width: 49px;
  padding-left: 8px;
  line-height: 20px;
  border-right: 1px solid #8f949b;
}

.views {
  margin-left: auto;
  display: flex;
  padding-left: 4px;
  border-left: 1px solid #9a9fa6;
}

.views button {
  width: 19px;
  height: 19px;
  display: flex;
  align-items: center;
  justify-content: center;
}

.percent-label {
  width: 43px;
  padding-left: 4px;
  text-align: center;
}

.zoom {
  width: 100px;
  height: 16px;
  margin: 0;
  appearance: none;
  background: linear-gradient(#777, #777) center / 100% 1px no-repeat;
}

.zoom::-webkit-slider-thumb {
  appearance: none;
  width: 9px;
  height: 13px;
  border: 1px solid #666;
  border-radius: 1px 1px 5px 5px;
  background: #f4f5f6;
}

.watermark {
  position: absolute;
  left: 844px;
  bottom: 8px;
  color: rgba(150, 150, 150, 0.5);
  font-family: "DejaVu Sans", sans-serif;
  font-size: 62px;
  font-weight: bold;
  line-height: 72px;
  pointer-events: none;
}

/* taskbar */
.taskbar {
  height: 40px;
  display: flex;
  flex: none;
  background: #1f1f1f;
  color: #fff;
}

.taskbar button {
  display: flex;
  align-items: center;
  justify-content: center;
}

.start {
  width: 48px;
}

.search {
  width: 288px;
  padding: 0 10px 0 11px;
  display: flex;
  align-items: center;
  gap: 10px;
  background: #f2f2f2;
  border: 1px solid #c5c5c5;
}

.search input {
  flex: 1;
  min-width: 0;
  padding: 0;
  border: 0;
  background: none;
  font-size: 14px;
}

.search input::placeholder {
  color: #3b3b3b;
}

.task-view {
  width: 48px;
}

.apps {
  display: flex;
  gap: 1px;
  margin-left: 3px;
}

.apps button {
  width: 48px;
  border: 0;
}

.open {
  background: linear-gradient(#e58ce8, #e58ce8) center bottom / 40px 2px no-repeat;
}

.open.multi {
  background: linear-gradient(90deg, #e58ce8 31px, #8f8f8f 31px) center bottom / 40px 2px no-repeat;
}

.open.current {
  background: linear-gradient(#e58ce8, #e58ce8) center bottom / 48px 2px no-repeat #4b4b4d;
}

.tray {
  margin-left: auto;
  padding-right: 14px;
  display: flex;
  align-items: center;
  gap: 8px;
  font-size: 12px;
}

.weather {
  gap: 8px;
  margin-right: 14px;
}

.lang {
  width: 22px;
}

.taskbar .clock {
  width: 60px;
  flex-direction: column;
  line-height: 18px;
}

.notify {
  margin-left: 6px;
}

.badge {
  font-family: "Open Sans", sans-serif;
  font-size: 11px;
  font-weight: bold;
  fill: #fff;
  text-anchor: middle;
}
```
FILE: script.js
```js
const headings = ['رقم السجل التجارى', 'اسم المصنع', 'الموقع', 'المنطقة', 'نوع الاستثمار', 'الهاتف', 'البريد الالكترونى'];

const kind = 'استثمار  مشترك';
const east = 'المنطقة الشرقية';
const makkah = 'منطقة مكة المكرمة';
const riyadh = 'منطقة الرياض';
const qassim = 'منطقة القصيم';

const factories = [
  ['7000677190', 'الشركة السعوديه لانابيب الصلب السعودية لانابيب الصلب', 'الدمام', east, '0504980291', 'debasi@sspipe.com'],
  ['7011035818', 'شركة اساس التدوير المحدودة', 'جدة', makkah, '', ''],
  ['7029668618', 'شركة الشبك الممدد للصناعات المعدنية', 'الجبيل', east, '', ''],
  ['7015108967', 'مصنع وفرة لمنتجات الحبوب فرع شركة وفرة للصناعة والتنمية', 'الرياض', riyadh, '0550512974', 'info@wafrah.com'],
  ['7001468169', 'شركة مصنع عالم النوابض', 'الرياض', riyadh, '0500013354', 'springsworld@hotmail.com'],
  ['7012488925', 'مصنع ديم القصيم للمياه المعدنية', 'بريدة', qassim, '0544064213', 'personnel@almuhailibgroup.com.sa'],
  ['7006464064', 'مصنع اشراقة الشرقيه للبلوك للبلك', 'حبونا', 'منطقة نجران', '', ''],
  ['7002716954', 'شركة موركس الصناعية شركة شخص واحد', 'الرياض', riyadh, '', ''],
  ['7009411039', 'شركة مجالات الحديد للتجارة و للصناعة', 'جدة', makkah, '', ''],
  ['7014882232', 'مصنع الجعيب للبلاستيك', 'الدمام', east, '0535225511', 'khalifas@joaib.com'],
  ['7003112088', 'مصنع موفي فهاد الفاران لصناعة هياكل السيارات', 'الرياض', riyadh, '0505470609', 'alfaran.co.ltd@hotmail.com'],
  ['7015624930', 'مصنع نبع المدينة لتعبئة المياه', 'المدينة المنورة', 'منطقة المدينة المنورة', '', ''],
  ['7014435460', 'مصنع الأفق العالي للصناعة', 'الدمام', east, '0541389816', 'esraa@nonwovenbags.com.sa'],
  ['7001443816', 'مصنع النخب الأول للرخام', 'الدمام', east, '0558220040', 'emfsalama2@yahoo.com'],
  ['7002612443', 'مصنع انظمه البناء السريع للصناعة', 'ملهم', riyadh, '0555520966', 'speedyksa@mail.com'],
  ['7012729393', 'مؤسسة مصنع تكامل للصناعات الخشبية', 'جدة', makkah, '0540528871', 'hr@baamerelectric.com'],
  ['7006818863', 'شركة صالح عبدالله السلمان وأولاده', 'بريدة', qassim, '0505141551', 'alsalmanprinting@hotmail.com'],
  ['7000675863', 'شركة مصنع الناصر والبندر للطابوق', 'الاحساء', east, '0505920803', 'alnaseralbander@yahoo.com'],
  ['7011351082', 'مصنع الرأس المربع للصناعة', 'جدة', makkah, '0505693623', 'nabeel@squarehead.com'],
  ['7001641674', 'شركة معادن للألم نيوم', 'راس الخير', east, '0504736418', 'harbia@ma.maaden.com.sa'],
  ['7012575713', 'شركة مصنع شركة سنابل السلام للصناعات الغذائية', 'الرياض', riyadh, '0562111175', 'malnadi@safm.com.sa'],
  ['7022103746', 'مصنع شركة حريملاء للحجر الطبيعي', 'حوطة سدير', riyadh, '0562677722', 'rrocks.stone@yahoo.com'],
  ['7002860380', 'شركة إيسيلور العربية السعودية المحدودة', 'جدة', makkah, '', ''],
  ['7011028417', 'شركة قطاف الكهربائية', 'الرياض', riyadh, '', ''],
  ['7001613350', 'شركة مصنع النساج العربي لصناعة الكنب والمفروشات', 'جدة', makkah, '0506357240', 'ALNASSAJA@HOTMAIL.COM'],
  ['7014332600', 'شركة المصنع الحديث للصناعات الحديدية المحدودة', 'جدة', makkah, '0501113111', 'gm@mfsico.com'],
  ['7014852797', 'مصنع نخيل الهدى للتمور', 'تاروت', east, '', ''],
  ['7015947430', 'مصنع شركة لين العربية التجارية', 'سيهات', east, '', ''],
  ['7008849213', 'شركة مصنع ركن اللدائن للصناعة', 'الجبيل', east, '0506420440', 'thamern@hotmail.com'],
  ['7003654683', 'شركة ري نوء المتحدة المحدودة', 'ذهبان', makkah, '', ''],
  ['7014937051', 'شركة الشرق الاوسط للصناعات الدوائية', 'الرياض', riyadh, '0504112195', 'Alexander.Triebnigg@avalon.com.sa'],
  ['7000959135', 'شركة شنايدر اليكتريك العربية السعودية', 'الرياض', riyadh, '0542161190', 'najib.alnaim@schneider-electric.com'],
  ['7001957930', 'مصنع البلك العمراني للصناعة شركة ذات مسؤولية محدودة', 'ملهم', riyadh, '0505467869', 'alomraniya@hotmail.com'],
  ['7009379160', 'شركة العناية الوحيدة للمنتجات البلاستيكية', 'حوطة سدير', riyadh, '0505633915', 'anas_nakhla@hotmail.com'],
  ['7011733297', 'مصنع شركة نقاء التدوير للاستثمار والتطوير الصناعي', 'بريدة', qassim, '', ''],
  ['7001458418', 'شركه امجاد الصحبه لصناعه الذهب والمجوهرات', 'جدة', makkah, '0557146280', 'ahmed.adel.diab@gmail.com'],
  ['7011859787', 'شركة المصنع السعودي للمنتجات المطاطيه  شركة الوسائل الصناعية', 'بريدة', qassim, '0505456357', 'saleh@alwasail.com'],
  ['7012155029', 'مصنع الجبيل للمنتجات الخرسانية', 'الجبيل', east, '0508079006', 'jcp@khonaini.com']
];

const tbody = document.getElementById('rows');

function addRow(number, values, className) {
  const tr = document.createElement('tr');
  if (className) tr.className = className;

  const th = document.createElement('th');
  th.scope = 'row';
  th.textContent = number;
  tr.appendChild(th);

  for (let i = 0; i < 11; i++) {
    const td = document.createElement('td');
    const text = values[i];
    if (text) {
      const cell = document.createElement('div');
      cell.className = /[\u0600-\u06ff]/.test(text) ? 'cell ar' : 'cell';
      cell.textContent = text;
      td.appendChild(cell);
      if (i === 6 && text.length > 31) td.className = 'spill';
    }
    tr.appendChild(td);
  }
  tbody.appendChild(tr);
}

addRow(1, headings, 'headings');
factories.forEach(([id, name, city, region, phone, email], index) => {
  addRow(index + 2, [id, name, city, region, kind, phone, email]);
});
```
